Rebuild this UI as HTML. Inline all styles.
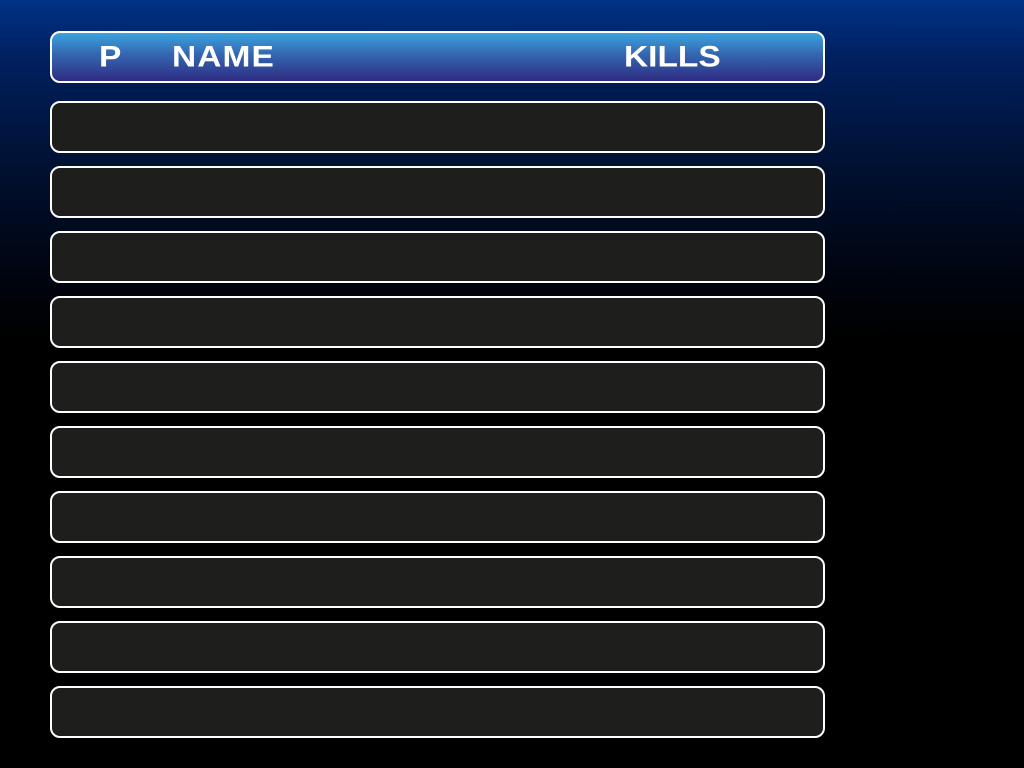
<!DOCTYPE html>
<html><head><meta charset="utf-8"><style>
html,body{margin:0;padding:0;}
body{width:1024px;height:768px;overflow:hidden;position:relative;
background:linear-gradient(to bottom,#003286 0px,#00205e 60px,#001030 170px,#00040e 280px,#000 340px,#000 768px);
font-family:"Liberation Sans",sans-serif;}
.box{position:absolute;left:50px;width:771px;height:48px;border:2px solid #fff;border-radius:10px;background:#1e1e1c;}
.hdr{top:31px;background:linear-gradient(to bottom,#3aa3de 0%,#3466b0 45%,#2e2b82 100%);}
.t{position:absolute;top:38px;color:#fff;font-weight:900;font-size:31px;line-height:40px;transform-origin:left top;transform:scale(1.08,0.95);}
</style></head><body>
<div class="box hdr"></div>
<div class="t" style="left:99px">P</div>
<div class="t" style="left:172px;letter-spacing:1px">NAME</div>
<div class="t" style="left:624px;letter-spacing:0px">KILLS</div>
<div class="box" style="top:101px"></div>
<div class="box" style="top:166px"></div>
<div class="box" style="top:231px"></div>
<div class="box" style="top:296px"></div>
<div class="box" style="top:361px"></div>
<div class="box" style="top:426px"></div>
<div class="box" style="top:491px"></div>
<div class="box" style="top:556px"></div>
<div class="box" style="top:621px"></div>
<div class="box" style="top:686px"></div>
</body></html>
